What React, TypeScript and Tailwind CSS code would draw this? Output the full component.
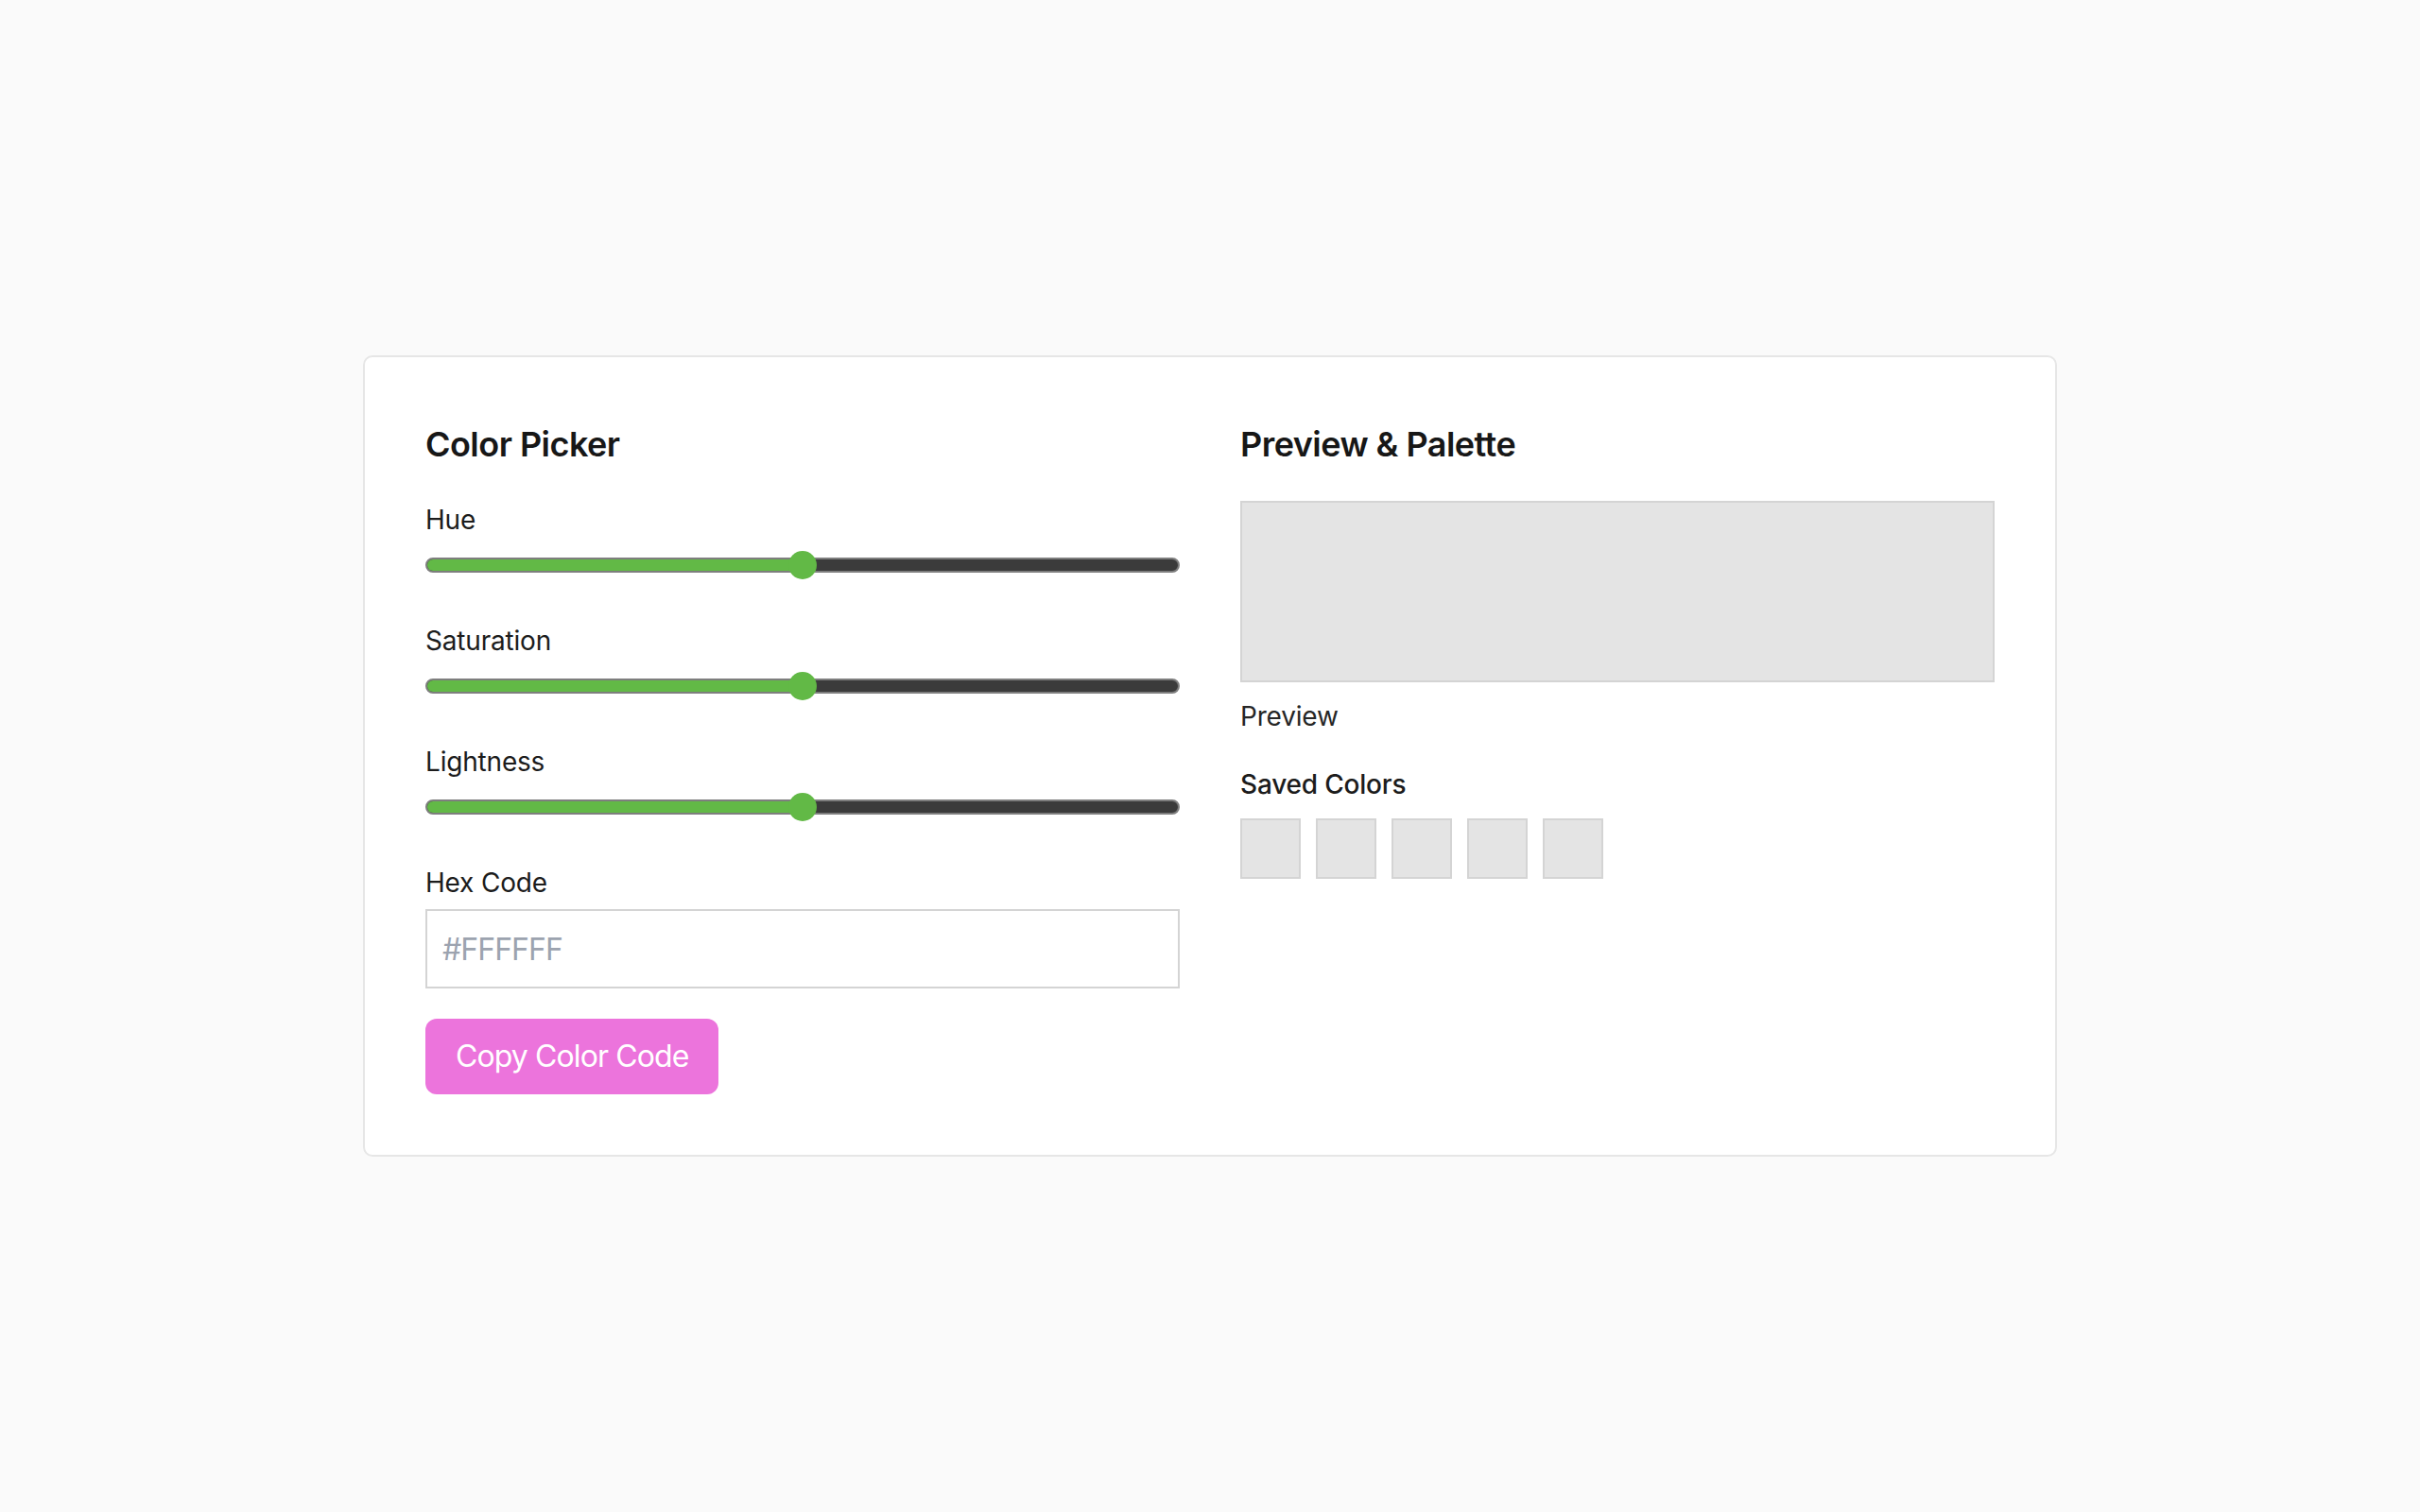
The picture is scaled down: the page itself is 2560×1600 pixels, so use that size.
import React from "react";

function Slider({ label, value }: { label: string; value: number }) {
  return (
    <div>
      <div className="text-[28px] leading-[40px] text-[#1c1c1c] mb-[16px]">{label}</div>
      <div className="relative h-[24px] flex items-center">
        <div className="relative w-full h-[16px] rounded-full border-2 border-[#7e7e7e] bg-[#3b3b3b] overflow-hidden">
          <div className="absolute left-0 top-0 bottom-0 bg-[#62b946]" style={{ width: `${value}%` }} />
        </div>
        <div
          className="absolute top-1/2 w-[30px] h-[30px] -translate-y-1/2 -translate-x-1/2 rounded-full bg-[#62b946]"
          style={{ left: `calc(15px + (100% - 30px) * ${value / 100})` }}
        />
      </div>
    </div>
  );
}

export default function App() {
  return (
    <div
      className="min-h-screen bg-[#fafafa] flex items-center justify-center tracking-[-0.012em]"
      style={{ fontFamily: "Inter, 'Liberation Sans', sans-serif" }}
    >
      <div className="w-[1792px] bg-white border-2 border-[#e6e6e6] rounded-[10px] p-[64px] grid grid-cols-2 gap-x-[64px]">
        <div>
          <h2 className="text-[36px] leading-[56px] font-semibold text-[#171717] tracking-[-0.015em] mb-[32px]">Color Picker</h2>
          <div className="flex flex-col gap-[48px]">
            <Slider label="Hue" value={50} />
            <Slider label="Saturation" value={50} />
            <Slider label="Lightness" value={50} />
          </div>
          <div className="mt-[48px]">
            <div className="text-[28px] leading-[40px] text-[#1c1c1c] mb-[8px]">Hex Code</div>
            <input
              type="text"
              placeholder="#FFFFFF"
              className="w-full h-[84px] border-2 border-[#d4d4d4] px-[16px] text-[32px] tracking-[-0.03em] text-[#1c1c1c] placeholder:text-[#9ca3af] outline-none bg-white"
            />
          </div>
          <button className="mt-[32px] h-[80px] px-[32px] rounded-[12px] bg-[#ec74dc] text-white text-[32px] leading-[48px] tracking-[-0.028em]">
            Copy Color Code
          </button>
        </div>
        <div>
          <h2 className="text-[36px] leading-[56px] font-semibold text-[#171717] tracking-[-0.015em] mb-[32px]">Preview &amp; Palette</h2>
          <div className="h-[192px] border-2 border-[#d4d4d4] bg-[#e4e4e4]" />
          <div className="mt-[16px] text-[28px] leading-[40px] text-[#262626]">Preview</div>
          <div className="mt-[32px] text-[28px] leading-[40px] font-medium text-[#1c1c1c] mb-[16px]">Saved Colors</div>
          <div className="flex gap-[16px]">
            {[0, 1, 2, 3, 4].map((i) => (
              <div key={i} className="w-[64px] h-[64px] border-2 border-[#d4d4d4] bg-[#e4e4e4]" />
            ))}
          </div>
        </div>
      </div>
    </div>
  );
}
